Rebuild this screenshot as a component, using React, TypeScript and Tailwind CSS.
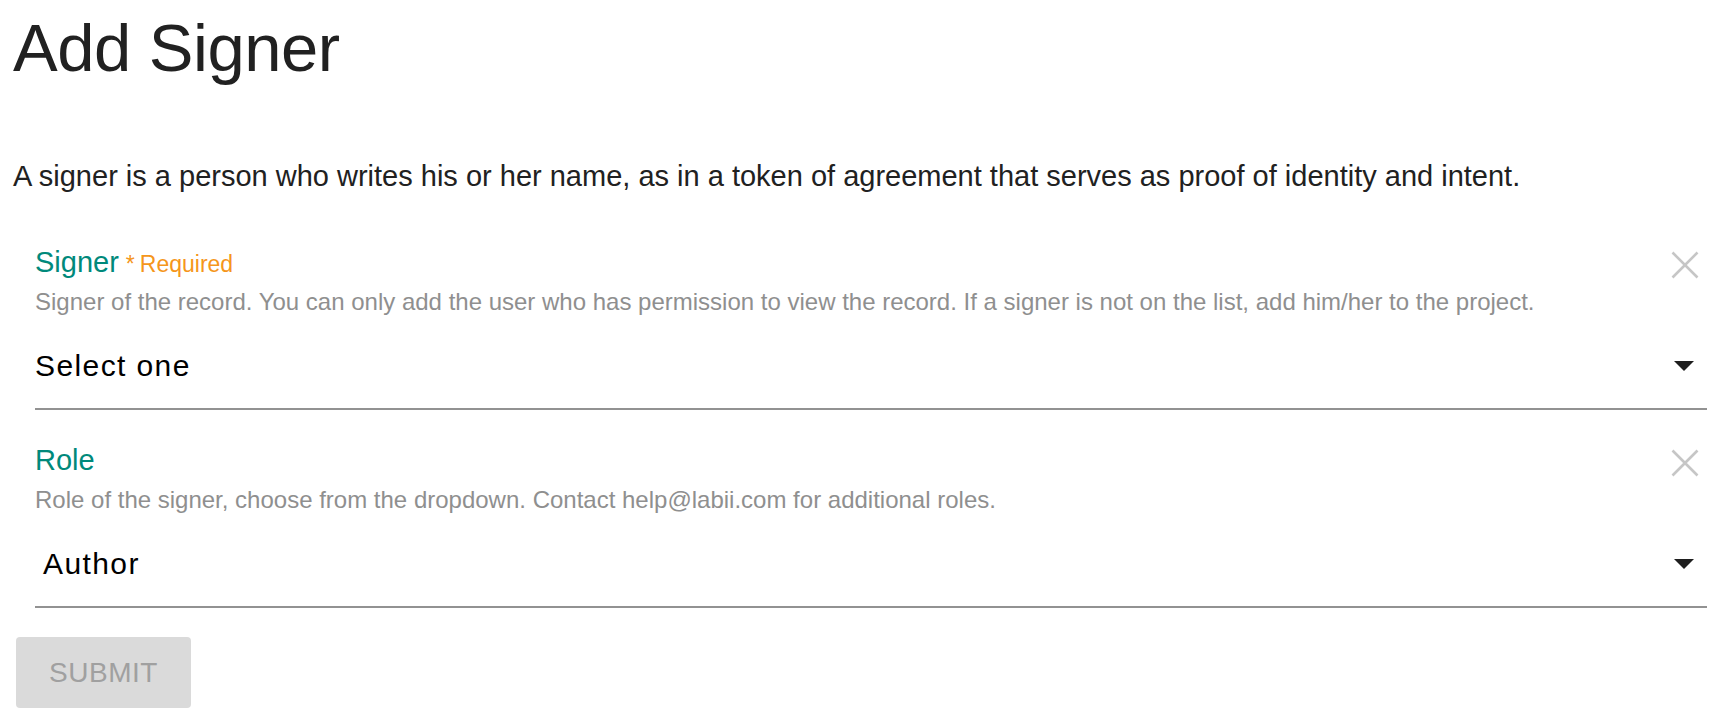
import React from 'react';

const CloseIcon: React.FC = () => (
  <svg width="28" height="28" viewBox="0 0 28 28" className="mt-[7px] mr-[8px] shrink-0">
    <path d="M1.5 1.5 L26.5 26.5 M26.5 1.5 L1.5 26.5" stroke="#c6c6c6" strokeWidth="2.6" strokeLinecap="butt" fill="none" />
  </svg>
);

const Caret: React.FC = () => (
  <svg width="20" height="10" viewBox="0 0 20 10" className="mr-[13px] shrink-0">
    <polygon points="0,0 20,0 10,10" fill="#1e1e1e" />
  </svg>
);

type FieldProps = {
  label: string;
  required?: boolean;
  help: string;
  value: string;
  indent?: boolean;
};

const SelectField: React.FC<FieldProps> = ({ label, required, help, value, indent }) => (
  <div className="ml-[22px] mr-[10px]">
    <div className="flex justify-between items-start">
      <div className="text-[29px] leading-[36px] text-[#00897b]">
        <span>{label}</span>
        {required && (
          <span className="ml-[7px] text-[23px] leading-[20px] text-[#f5961b]">
            <span>*</span>
            <span className="ml-[5px]">Required</span>
          </span>
        )}
      </div>
      <CloseIcon />
    </div>
    <p className="mt-[6px] text-[24px] leading-[32px] text-[#8f8f8f]">{help}</p>
    <div className="mt-[30px] flex items-center justify-between pb-[24px] border-b-2 border-[#929292]">
      <span className={`text-[30px] leading-[36px] tracking-[1.4px] text-black ${indent ? 'pl-[8px]' : ''}`}>{value}</span>
      <Caret />
    </div>
  </div>
);

export default function App() {
  return (
    <div className="min-h-screen bg-white px-[13px] pt-[8px] font-['Liberation_Sans',Arial,sans-serif]">
      <h1 className="text-[67px] leading-[80px] tracking-[-0.5px] text-[#212121]">Add Signer</h1>
      <p className="mt-[68px] text-[29px] leading-[40px] text-[#212121]">
        A signer is a person who writes his or her name, as in a token of agreement that serves as proof of identity and intent.
      </p>
      <div className="mt-[48px] flex flex-col gap-[32px]">
        <SelectField
          label="Signer"
          required
          help="Signer of the record. You can only add the user who has permission to view the record. If a signer is not on the list, add him/her to the project."
          value="Select one"
        />
        <SelectField
          label="Role"
          help="Role of the signer, choose from the dropdown. Contact help@labii.com for additional roles."
          value="Author"
          indent
        />
      </div>
      <button
        disabled
        className="mt-[29px] ml-[3px] flex h-[71px] w-[175px] items-center justify-center rounded-[4px] bg-[#dadada] text-[28px] leading-[36px] tracking-[0.5px] text-[#a0a0a0]"
      >
        SUBMIT
      </button>
    </div>
  );
}
